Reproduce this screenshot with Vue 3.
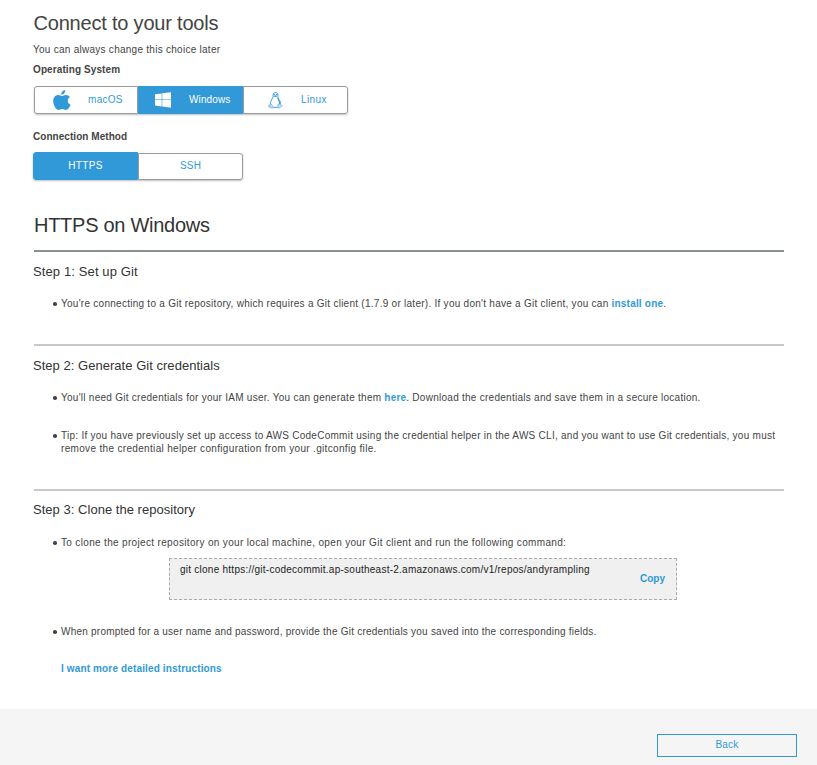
<script setup>
import { ref } from 'vue'

const os = ref('Windows')
const method = ref('HTTPS')
const systems = ['macOS', 'Windows', 'Linux']
const methods = ['HTTPS', 'SSH']
const command = 'git clone https://git-codecommit.ap-southeast-2.amazonaws.com/v1/repos/andyrampling'
</script>

<template>
  <div class="page">
    <main class="content">
      <h1>Connect to your tools</h1>
      <p class="hint">You can always change this choice later</p>
      <p class="label os-label">Operating System</p>
      <div class="group os-group">
        <button v-for="s in systems" :key="s" :class="['opt', s.toLowerCase(), { active: s === os }]" @click="os = s">
          <svg v-if="s === 'macOS'" class="icon" width="20" height="22" viewBox="0 0 20 22">
            <path fill="#3199d7" d="M13.200 1C13.500 3.600 11.400 5.900 9.200 5.700C9 3.300 11 1.300 13.200 1ZM9.700 7C11 7 12 5.900 14 5.900C15.500 5.900 17 6.700 18 8C14.700 10 15.200 14.200 18.600 15.700C17.700 18 15.900 20.900 13.900 20.900C12.500 20.900 11.900 20.100 10.200 20.100C8.500 20.100 7.900 20.900 6.600 20.900C4 20.900 1.200 16 1.200 12C1.200 8 3.800 6 6.200 6C7.700 6 8.900 7 9.700 7Z" />
          </svg>
          <svg v-else-if="s === 'Windows'" class="icon" width="16" height="16" viewBox="0 0 16 16">
            <path fill="#fff" d="M0 2.300L6.700 1.400V7.500H0ZM7.300 1.300L16 .2V7.500H7.300ZM0 8.100H6.700V14.400L0 13.500ZM7.300 8.100H16V15.800L7.300 14.500Z" />
          </svg>
          <svg v-else class="icon" width="15" height="17" viewBox="0 0 14 17" preserveAspectRatio="none">
            <g fill="none" stroke="#3199d7" stroke-width=".9">
              <path fill="#fff" d="M7 .5C5.200 .5 4.700 1.800 4.800 3.300C4.900 5.500 3.900 6.400 3.200 8.200C2.500 10 2 11.300 2.500 12.500L5 15.400H9.100L11.500 12.600C12 11 11.300 9 10.200 7.400C9.300 6 9.300 5 9.300 3.200C9.300 1.500 8.700 .5 7 .5Z" />
              <path d="M9 5.700C9.700 7.500 10.800 9 10.700 12" stroke-width="1" />
              <path fill="#b5daf0" stroke="#6bb5e2" d="M.7 13.100L2.700 11.900L5.200 14.900L4.500 16.200L.6 15.100ZM9.200 12.500L11.600 12.300L13.400 14L10.200 16.200L8.900 15.500Z" stroke-width=".6" />
            </g>
            <path fill="#3199d7" d="M5 3.900L7 3.300L8.900 4L6.800 5.200ZM5.400 1.800h1v1.200h-1ZM7.500 1.800h1v1.200h-1Z" />
          </svg>
          <span>{{ s }}</span>
        </button>
      </div>
      <p class="label method-label">Connection Method</p>
      <div class="group method-group">
        <button v-for="m in methods" :key="m" :class="['opt', m.toLowerCase(), { active: m === method }]" @click="method = m">
          <span>{{ m }}</span>
        </button>
      </div>

      <h2>HTTPS on Windows</h2>

      <section class="step one">
        <h3>Step 1: Set up Git</h3>
        <ul>
          <li class="l1">You're connecting to a Git repository, which requires a Git client (1.7.9 or later). If you don't have a Git client, you can <a>install one</a>.</li>
        </ul>
      </section>
      <section class="step two">
        <h3>Step 2: Generate Git credentials</h3>
        <ul>
          <li class="l2">You'll need Git credentials for your IAM user. You can generate them <a>here</a>. Download the credentials and save them in a secure location.</li>
          <li class="l3">Tip: If you have previously set up access to AWS CodeCommit using the credential helper in the AWS CLI, and you want to use Git credentials, you must<br><span class="wrapped">remove the credential helper configuration from your .gitconfig file.</span></li>
        </ul>
      </section>
      <section class="step three">
        <h3>Step 3: Clone the repository</h3>
        <ul>
          <li class="l4">To clone the project repository on your local machine, open your Git client and run the following command:</li>
        </ul>
        <div class="command">
          <code>{{ command }}</code>
          <a>Copy</a>
        </div>
        <ul class="after">
          <li class="l5">When prompted for a user name and password, provide the Git credentials you saved into the corresponding fields.</li>
        </ul>
        <a class="more">I want more detailed instructions</a>
      </section>
    </main>
    <footer>
      <button class="back">Back</button>
    </footer>
  </div>
</template>

<style>
body { background: #fff; }
</style>

<style scoped>
.page {
  width: 817px;
  height: 765px;
  display: flex;
  flex-direction: column;
  overflow: hidden;
  font-family: "Liberation Sans", Arial, sans-serif;
  font-size: 10px;
  line-height: 13px;
  letter-spacing: .265px;
  color: #444;
  white-space: nowrap;
}
.page * { box-sizing: border-box; }
h1, h2, h3, p, ul { margin: 0; padding: 0; font-weight: 400; }
button { font: inherit; letter-spacing: .2px; padding: 0; margin: 0; border: 0; border-radius: 0; background: none; }
a { color: #3199d7; font-weight: 700; letter-spacing: .2px; cursor: pointer; }

.content { height: 709px; flex: none; padding: 11px 33px 0; }
h1 { padding-left: .5px; font-size: 20px; line-height: 24px; letter-spacing: -.2px; }
.hint { margin-top: 8px; }
.label { font-weight: 700; letter-spacing: .1px; }
.os-label { margin-top: 7px; }
.method-label { margin-top: 16px; letter-spacing: .05px; }

.group { display: flex; align-items: flex-end; border-radius: 3px; box-shadow: 0 1px 2px rgba(0, 0, 0, .25); }
.os-group { width: 314px; height: 28px; margin: 10px 0 0 1px; }
.method-group { width: 210px; height: 28px; margin-top: 9px; }
.opt {
  display: flex;
  align-items: center;
  height: 28px;
  border: 1px solid #999;
  background: #fff;
  color: #3199d7;
}
.opt span { padding-bottom: 1px; }
.opt:first-child { border-radius: 3px 0 0 3px; }
.opt:last-child { border-radius: 0 3px 3px 0; }
.opt.active { background: #3199d7; border-color: #3199d7; color: #fff; }
.macos { width: 104px; padding-left: 17px; gap: 16px; letter-spacing: .3px; }
.windows { width: 105px; padding-left: 16px; gap: 18px; letter-spacing: .12px; }
.linux { width: 105px; padding-left: 24px; gap: 18px; letter-spacing: .4px; }
.https { width: 105px; justify-content: center; letter-spacing: .35px; }
.opt.ssh { width: 105px; height: 27px; justify-content: center; }
.ssh span { padding-bottom: 2px; }
.icon { display: block; flex: none; }

h2 {
  margin: 31px 0 0 1px;
  width: 750px;
  height: 41px;
  font-size: 20px;
  line-height: 28px;
  letter-spacing: -.27px;
  color: #333;
  border-bottom: 2px solid #879191;
}
.step { margin-left: 1px; width: 750px; border-bottom: 2px solid #c8c8c8; }
.one { height: 94px; }
.two { height: 145px; }
.three { border: 0; }
h3 { margin-left: -1px; padding-top: 11px; font-size: 13px; line-height: 18px; letter-spacing: .12px; color: #333; }
.two h3, .three h3 { letter-spacing: .03px; }
.three h3 { padding-top: 10px; }
ul { list-style: none; padding: 16px 0 0 19px; }
.three ul { padding-top: 17px; }
li { padding-left: 8px; }
li::before { content: ""; float: left; width: 3.6px; height: 3.6px; margin: 5.400px 0 0 -7.800px; border-radius: 50%; background: #444; }
.l3 { margin-top: 25px; }
.wrapped { letter-spacing: .33px; }
.l4 { letter-spacing: .335px; }
.l5 { letter-spacing: .23px; }
.command {
  display: flex;
  justify-content: space-between;
  width: 508px;
  height: 42px;
  margin: 9px 0 0 135px;
  padding: 4px 11px 0 10px;
  border: 1px dashed #aaa;
  background: #f0f0f0;
}
.command code { font: inherit; letter-spacing: .25px; color: #222; }
.command a { margin-top: 9px; letter-spacing: 0; }
.three .after { padding-top: 25px; }
.more { display: block; margin: 24px 0 0 27px; letter-spacing: .14px; }

footer { flex: 1; display: flex; justify-content: flex-end; padding: 25px 20px 0 0; background: #f5f5f5; }
.back { width: 140px; height: 23px; padding: 0 0 2px; border: 1px solid #3199d7; color: #3199d7; line-height: 19px; }
</style>
